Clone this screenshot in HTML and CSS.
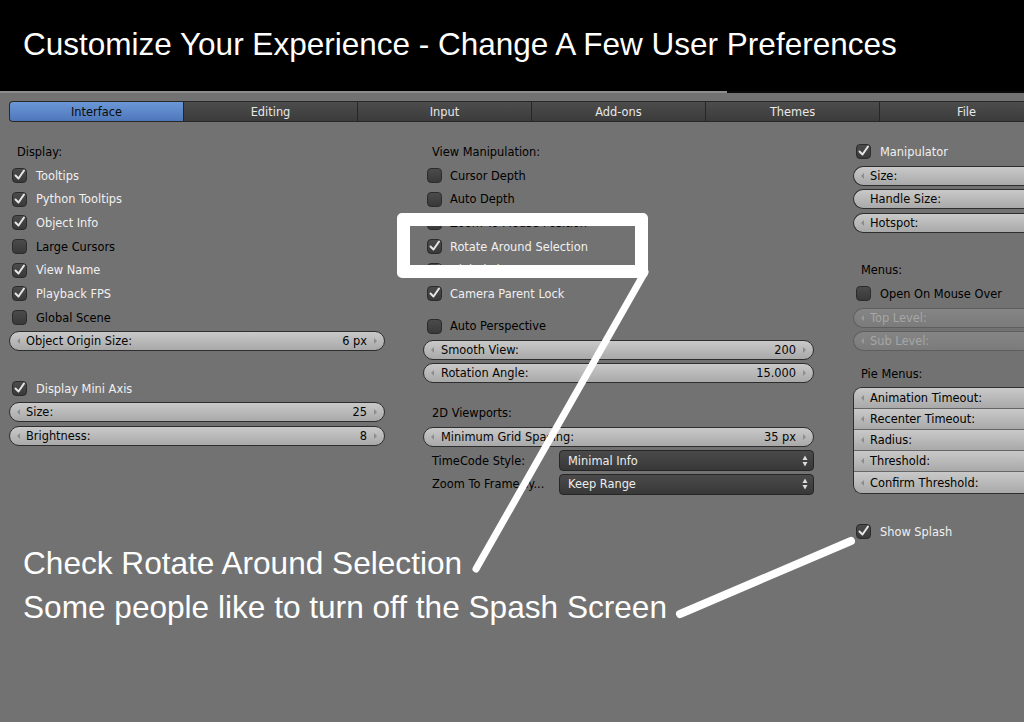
FILE: index.html
```html
<!DOCTYPE html>
<html>
<head>
<meta charset="utf-8">
<link rel="stylesheet" href="styles.css">
</head>
<body>
<div class="header"><h1 class="title">Customize Your Experience - Change A Few User Preferences</h1></div>
<div class="rule"></div>
<div class="prefs">
  <div class="tabs">
    <div class="tab active">Interface</div>
    <div class="tab">Editing</div>
    <div class="tab">Input</div>
    <div class="tab">Add-ons</div>
    <div class="tab">Themes</div>
    <div class="tab">File</div>
  </div>
  <div class="cols">
    <div class="col">
      <div class="row head">Display:</div>
      <div class="row"><span class="cb"><svg viewBox="0 0 15 15"><path d="M3.5 7.5 L6.5 10.5 L12 2.5"/></svg></span><span class="lbl on">Tooltips</span></div>
      <div class="row"><span class="cb"><svg viewBox="0 0 15 15"><path d="M3.5 7.5 L6.5 10.5 L12 2.5"/></svg></span><span class="lbl on">Python Tooltips</span></div>
      <div class="row"><span class="cb"><svg viewBox="0 0 15 15"><path d="M3.5 7.5 L6.5 10.5 L12 2.5"/></svg></span><span class="lbl on">Object Info</span></div>
      <div class="row"><span class="cb"></span><span class="lbl">Large Cursors</span></div>
      <div class="row"><span class="cb"><svg viewBox="0 0 15 15"><path d="M3.5 7.5 L6.5 10.5 L12 2.5"/></svg></span><span class="lbl on">View Name</span></div>
      <div class="row"><span class="cb"><svg viewBox="0 0 15 15"><path d="M3.5 7.5 L6.5 10.5 L12 2.5"/></svg></span><span class="lbl on">Playback FPS</span></div>
      <div class="row"><span class="cb"></span><span class="lbl">Global Scene</span></div>
      <div class="row"><div class="slider"><span class="al"></span><span class="sl">Object Origin Size:</span><span class="sv">6 px</span><span class="ar"></span></div></div>
      <div class="row"></div>
      <div class="row"><span class="cb"><svg viewBox="0 0 15 15"><path d="M3.5 7.5 L6.5 10.5 L12 2.5"/></svg></span><span class="lbl on">Display Mini Axis</span></div>
      <div class="row"><div class="slider"><span class="al"></span><span class="sl">Size:</span><span class="sv">25</span><span class="ar"></span></div></div>
      <div class="row"><div class="slider"><span class="al"></span><span class="sl">Brightness:</span><span class="sv">8</span><span class="ar"></span></div></div>
    </div>

    <div class="col mid">
      <div class="row head">View Manipulation:</div>
      <div class="row"><span class="cb"></span><span class="lbl">Cursor Depth</span></div>
      <div class="row"><span class="cb"></span><span class="lbl">Auto Depth</span></div>
      <div class="row"><span class="cb"></span><span class="lbl">Zoom To Mouse Position</span></div>
      <div class="row"><span class="cb"><svg viewBox="0 0 15 15"><path d="M3.5 7.5 L6.5 10.5 L12 2.5"/></svg></span><span class="lbl on">Rotate Around Selection</span></div>
      <div class="row"><span class="cb"><svg viewBox="0 0 15 15"><path d="M3.5 7.5 L6.5 10.5 L12 2.5"/></svg></span><span class="lbl on">Global Pivot</span></div>
      <div class="row"><span class="cb"><svg viewBox="0 0 15 15"><path d="M3.5 7.5 L6.5 10.5 L12 2.5"/></svg></span><span class="lbl on">Camera Parent Lock</span></div>
      <div class="sp-a"></div>
      <div class="row"><span class="cb"></span><span class="lbl">Auto Perspective</span></div>
      <div class="row"><div class="slider"><span class="al"></span><span class="sl">Smooth View:</span><span class="sv">200</span><span class="ar"></span></div></div>
      <div class="row"><div class="slider"><span class="al"></span><span class="sl">Rotation Angle:</span><span class="sv">15.000</span><span class="ar"></span></div></div>
      <div class="sp-b"></div>
      <div class="row head">2D Viewports:</div>
      <div class="row"><div class="slider"><span class="al"></span><span class="sl">Minimum Grid Spacing:</span><span class="sv">35 px</span><span class="ar"></span></div></div>
      <div class="row"><span class="flabel">TimeCode Style:</span><div class="select"><span>Minimal Info</span><svg class="updown" viewBox="0 0 6 12"><path d="M3 0.5 L5.5 5 L0.5 5 Z M3 11.5 L5.5 7 L0.5 7 Z"/></svg></div></div>
      <div class="row"><span class="flabel">Zoom To Frame Ty...</span><div class="select"><span>Keep Range</span><svg class="updown" viewBox="0 0 6 12"><path d="M3 0.5 L5.5 5 L0.5 5 Z M3 11.5 L5.5 7 L0.5 7 Z"/></svg></div></div>
    </div>

    <div class="col right">
      <div class="row"><span class="cb"><svg viewBox="0 0 15 15"><path d="M3.5 7.5 L6.5 10.5 L12 2.5"/></svg></span><span class="lbl on">Manipulator</span></div>
      <div class="row"><div class="slider"><span class="al"></span><span class="sl">Size:</span></div></div>
      <div class="row"><div class="slider"><span class="al blank"></span><span class="sl">Handle Size:</span></div></div>
      <div class="row"><div class="slider"><span class="al"></span><span class="sl">Hotspot:</span></div></div>
      <div class="row"></div>
      <div class="row head">Menus:</div>
      <div class="row"><span class="cb"></span><span class="lbl">Open On Mouse Over</span></div>
      <div class="row"><div class="slider off"><span class="al"></span><span class="sl">Top Level:</span></div></div>
      <div class="row"><div class="slider off"><span class="al"></span><span class="sl">Sub Level:</span></div></div>
      <div class="sp-c"></div>
      <div class="row head">Pie Menus:</div>
      <div class="pie">
        <div class="pitem"><span class="al"></span><span class="sl">Animation Timeout:</span></div>
        <div class="pitem"><span class="al"></span><span class="sl">Recenter Timeout:</span></div>
        <div class="pitem"><span class="al"></span><span class="sl">Radius:</span></div>
        <div class="pitem"><span class="al"></span><span class="sl">Threshold:</span></div>
        <div class="pitem"><span class="al"></span><span class="sl">Confirm Threshold:</span></div>
      </div>
      <div class="sp-d"></div>
      <div class="row"><span class="cb"><svg viewBox="0 0 15 15"><path d="M3.5 7.5 L6.5 10.5 L12 2.5"/></svg></span><span class="lbl on">Show Splash</span></div>
    </div>
  </div>
</div>

<div class="callout"></div>
<svg class="pointers" viewBox="0 0 1024 722" width="1024" height="722">
  <line x1="645" y1="272" x2="476" y2="569" stroke-width="7"/>
  <line x1="680" y1="614" x2="851" y2="541" stroke-width="8"/>
</svg>
<div class="notes">
  <div>Check Rotate Around Selection</div>
  <div>Some people like to turn off the Spash Screen</div>
</div>
</body>
</html>
```

FILE: styles.css
```css
html, body {
  margin: 0;
  padding: 0;
}
body {
  width: 1024px;
  height: 722px;
  overflow: hidden;
  position: relative;
  background: #727272;
  font-family: "DejaVu Sans", "Liberation Sans", sans-serif;
  font-size: 11.4px;
  color: #000;
}

.header {
  height: 91px;
  background: #000;
  box-sizing: border-box;
  padding: 26px 0 0 23px;
}
.title {
  margin: 0;
  font-family: "Liberation Sans", Arial, sans-serif;
  font-weight: 400;
  font-size: 31.5px;
  line-height: 36px;
  color: #fff;
  white-space: nowrap;
}
.rule {
  height: 2px;
  background: linear-gradient(to right, #8d8d8d 0, #8d8d8d 727px, #0a0a0a 727px, #0a0a0a 100%);
}

.prefs {
  padding: 8px 0 0 9px;
  width: 1024px;
  box-sizing: border-box;
  overflow: hidden;
}

.tabs {
  display: flex;
  width: 1015px;
  height: 21px;
  box-sizing: border-box;
  border: 1px solid #282828;
  border-right: none;
  border-radius: 4px 0 0 4px;
  overflow: hidden;
}
.tab {
  flex: 0 0 174px;
  box-sizing: border-box;
  display: flex;
  align-items: center;
  justify-content: center;
  color: #e8e8e8;
  background: linear-gradient(#4c4c4c, #3b3b3b);
  border-left: 1px solid #262626;
}
.tab.active {
  flex-basis: 173px;
  border-left: none;
  border-radius: 3px 0 0 3px;
  background: linear-gradient(#6b97d7, #4d77ba);
  color: #0b0b0b;
}

.cols {
  display: grid;
  grid-template-columns: 376px 391px 376px;
  column-gap: 38px;
  margin-top: 18px;
}
.col.right {
  padding-left: 1px;
}

.row {
  height: 23.7px;
  display: flex;
  align-items: center;
  white-space: nowrap;
}
.head {
  padding-left: 8px;
}
.mid .head {
  padding-left: 9px;
}

.cb {
  flex: none;
  position: relative;
  width: 15px;
  height: 15px;
  box-sizing: border-box;
  margin-left: 3px;
  margin-right: 9px;
  border: 1px solid #2b2b2b;
  border-radius: 4px;
  background: linear-gradient(#4b4b4b, #393939);
}
.mid .cb {
  margin-left: 4px;
  margin-right: 8px;
}
.cb svg {
  position: absolute;
  left: -1px;
  top: -1px;
  width: 15px;
  height: 15px;
  overflow: visible;
}
.cb svg path {
  fill: none;
  stroke: #e6e6e6;
  stroke-width: 2;
  stroke-linecap: round;
  stroke-linejoin: round;
}
.lbl {
  color: #000;
}
.lbl.on {
  color: #f0f0f0;
}

.slider {
  flex: 1;
  height: 20px;
  box-sizing: border-box;
  display: flex;
  align-items: center;
  padding: 0 7px;
  border: 1px solid #2e2e2e;
  border-radius: 10px;
  background: linear-gradient(#c9c9c9, #a9a9a9);
  color: #050505;
}
.right .slider {
  border-right: none;
  border-radius: 10px 0 0 10px;
}
.al, .ar {
  flex: none;
  width: 0;
  height: 0;
  border-top: 3px solid transparent;
  border-bottom: 3px solid transparent;
}
.al {
  border-right: 3px solid #8c8c8c;
}
.al.blank {
  border-right-color: transparent;
}
.ar {
  border-left: 3px solid #8c8c8c;
  margin-left: 7px;
}
.sl {
  flex: 1;
  margin-left: 6px;
}
.mid .sl {
  margin-left: 7px;
}
.sv {
  flex: none;
}

.slider.off {
  background: linear-gradient(#858585, #7b7b7b);
  border-color: #5e5e5e;
  color: #a6a6a6;
}
.slider.off .al {
  border-right-color: #9a9a9a;
}

.flabel {
  padding-left: 9px;
}
.select {
  margin-left: auto;
  width: 255px;
  height: 21px;
  box-sizing: border-box;
  display: flex;
  align-items: center;
  justify-content: space-between;
  padding: 0 5px 0 8px;
  border: 1px solid #262626;
  border-radius: 4px;
  background: linear-gradient(#4a4a4a, #383838);
  color: #ececec;
}
.updown {
  width: 6px;
  height: 12px;
}
.updown path {
  fill: #dcdcdc;
}

.sp-a { height: 8.4px; }
.sp-b { height: 16.2px; }
.sp-c { height: 8.6px; }
.sp-d { height: 26.2px; }

.pie {
  margin-top: 1.2px;
  height: 107px;
  box-sizing: border-box;
  border: 1px solid #2e2e2e;
  border-right: none;
  border-radius: 9px 0 0 9px;
  overflow: hidden;
  display: flex;
  flex-direction: column;
}
.pitem {
  flex: 1;
  display: flex;
  align-items: center;
  padding: 0 7px;
  background: linear-gradient(#c9c9c9, #a9a9a9);
  border-top: 1px solid #666;
  white-space: nowrap;
}
.pitem:first-child {
  border-top: none;
}

.callout {
  position: absolute;
  left: 397px;
  top: 213px;
  width: 251px;
  height: 65px;
  box-sizing: border-box;
  border: 13px solid #fff;
  border-radius: 5px;
}
.pointers {
  position: absolute;
  left: 0;
  top: 0;
  pointer-events: none;
}
.pointers line {
  stroke: #fff;
  stroke-linecap: round;
}
.notes {
  position: absolute;
  left: 23px;
  top: 541px;
  font-family: "Liberation Sans", Arial, sans-serif;
  font-size: 31.6px;
  line-height: 44px;
  color: #fff;
  white-space: nowrap;
}
```
